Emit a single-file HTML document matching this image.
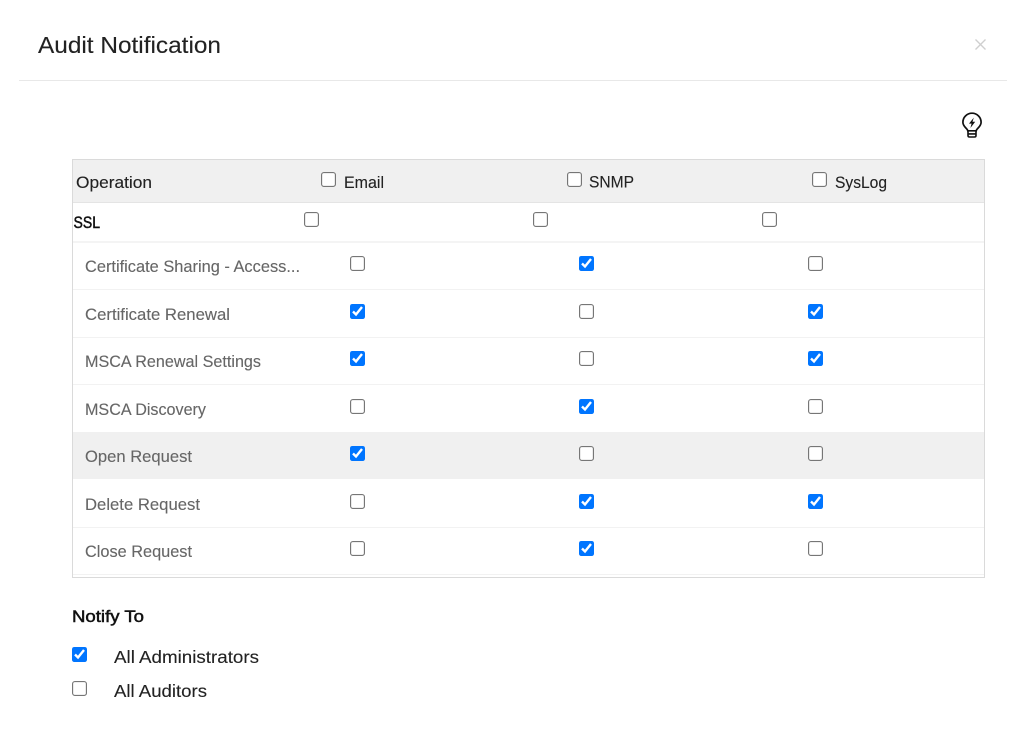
<!DOCTYPE html>
<html><head><meta charset="utf-8"><title>Audit Notification</title>
<style>
html,body{margin:0;padding:0;background:#fff;width:1033px;height:730px;overflow:hidden}
body{position:relative;font-family:"Liberation Sans",sans-serif}
.b{position:absolute}
input{position:absolute;margin:0;width:13px;height:13px;transform:scale(1.154);transform-origin:0 0}
svg{position:absolute;left:0;top:0}
text{font-family:"Liberation Sans",sans-serif;font-size:16.5px;fill:#222;stroke:#222;stroke-width:.12px}
text.g{fill:#666;stroke:#666}
text.s{stroke-width:.5px;fill:#111;stroke:#111}
</style></head><body>
<div class="b" style="left:19px;top:80px;width:988px;height:1px;background:#e8e8e8"></div>
<div class="b" style="left:72px;top:159px;width:911px;height:417px;border:1px solid #dadada"></div>
<div class="b" style="left:73px;top:160px;width:911px;height:42px;background:#f0f0f0;border-bottom:1px solid #e4e4e4"></div>
<div class="b" style="left:73px;top:241px;width:911px;height:2px;background:#f4f4f4"></div>
<div class="b" style="left:73px;top:289px;width:911px;height:1px;background:#f2f2f2"></div>
<div class="b" style="left:73px;top:337px;width:911px;height:1px;background:#f2f2f2"></div>
<div class="b" style="left:73px;top:384px;width:911px;height:1px;background:#f2f2f2"></div>
<div class="b" style="left:73px;top:432px;width:911px;height:47px;background:#f0f0f0"></div>
<div class="b" style="left:73px;top:527px;width:911px;height:1px;background:#f2f2f2"></div>
<div class="b" style="left:73px;top:574px;width:911px;height:1px;background:#f2f2f2"></div>

<svg width="1033" height="730" viewBox="0 0 1033 730">
<text x="38" y="53" style="font-size:23.5px" textLength="183" lengthAdjust="spacingAndGlyphs">Audit Notification</text>
<path d="M975.5 39.5L985.5 49.5M985.5 39.5L975.5 49.500" stroke="#cfcfcf" stroke-width="1.4" fill="none"/>
<path d="M967.8 130.8C967.3 128 962.9 127 962.900 122.300A9.100 9.100 0 1 1 981.100 122.300C981.100 127 976.700 128 976.200 130.800Z" stroke="#111" stroke-width="1.7" fill="none"/>
<path d="M968 130.800V135.500Q968 137 969.500 137H974.500Q976 137 976 135.500V130.800M968 133.900H976" stroke="#111" stroke-width="1.600" fill="none"/>
<path d="M973.800 117.600L969 123.600H971.600L970.400 128L975.200 121.800H972.500Z" fill="#111"/>

<text x="76" y="188" textLength="76" lengthAdjust="spacingAndGlyphs">Operation</text>
<text x="344" y="188" textLength="40" lengthAdjust="spacingAndGlyphs">Email</text>
<text x="589" y="187.500" textLength="45" lengthAdjust="spacingAndGlyphs">SNMP</text>
<text x="835" y="188" textLength="52" lengthAdjust="spacingAndGlyphs">SysLog</text>
<text x="73.500" y="228" class="s" textLength="26.500" lengthAdjust="spacingAndGlyphs">SSL</text>
<text x="85" y="272" class="g" textLength="215" lengthAdjust="spacingAndGlyphs">Certificate Sharing - Access...</text>
<text x="85" y="320" class="g" textLength="145" lengthAdjust="spacingAndGlyphs">Certificate Renewal</text>
<text x="85" y="367" class="g" textLength="176" lengthAdjust="spacingAndGlyphs">MSCA Renewal Settings</text>
<text x="85" y="415" class="g" textLength="121" lengthAdjust="spacingAndGlyphs">MSCA Discovery</text>
<text x="85" y="462" class="g" textLength="107" lengthAdjust="spacingAndGlyphs">Open Request</text>
<text x="85" y="510" class="g" textLength="115" lengthAdjust="spacingAndGlyphs">Delete Request</text>
<text x="85" y="557" class="g" textLength="107" lengthAdjust="spacingAndGlyphs">Close Request</text>
<text x="72" y="622" class="s" textLength="72" lengthAdjust="spacingAndGlyphs">Notify To</text>
<text x="114" y="663" style="font-size:17.500px" textLength="145" lengthAdjust="spacingAndGlyphs">All Administrators</text>
<text x="114" y="697" style="font-size:17.500px" textLength="93" lengthAdjust="spacingAndGlyphs">All Auditors</text>
</svg>

<input type="checkbox" style="left:321px;top:172px">
<input type="checkbox" style="left:567px;top:172px">
<input type="checkbox" style="left:812px;top:172px">
<input type="checkbox" style="left:304px;top:212px">
<input type="checkbox" style="left:533px;top:212px">
<input type="checkbox" style="left:762px;top:212px">

<input type="checkbox" style="left:350px;top:256px">
<input type="checkbox" checked style="left:579px;top:256px">
<input type="checkbox" style="left:808px;top:256px">

<input type="checkbox" checked style="left:350px;top:304px">
<input type="checkbox" style="left:579px;top:304px">
<input type="checkbox" checked style="left:808px;top:304px">

<input type="checkbox" checked style="left:350px;top:351px">
<input type="checkbox" style="left:579px;top:351px">
<input type="checkbox" checked style="left:808px;top:351px">

<input type="checkbox" style="left:350px;top:399px">
<input type="checkbox" checked style="left:579px;top:399px">
<input type="checkbox" style="left:808px;top:399px">

<input type="checkbox" checked style="left:350px;top:446px">
<input type="checkbox" style="left:579px;top:446px">
<input type="checkbox" style="left:808px;top:446px">

<input type="checkbox" style="left:350px;top:494px">
<input type="checkbox" checked style="left:579px;top:494px">
<input type="checkbox" checked style="left:808px;top:494px">

<input type="checkbox" style="left:350px;top:541px">
<input type="checkbox" checked style="left:579px;top:541px">
<input type="checkbox" style="left:808px;top:541px">

<input type="checkbox" checked style="left:72px;top:647px">
<input type="checkbox" style="left:72px;top:681px">
</body></html>
